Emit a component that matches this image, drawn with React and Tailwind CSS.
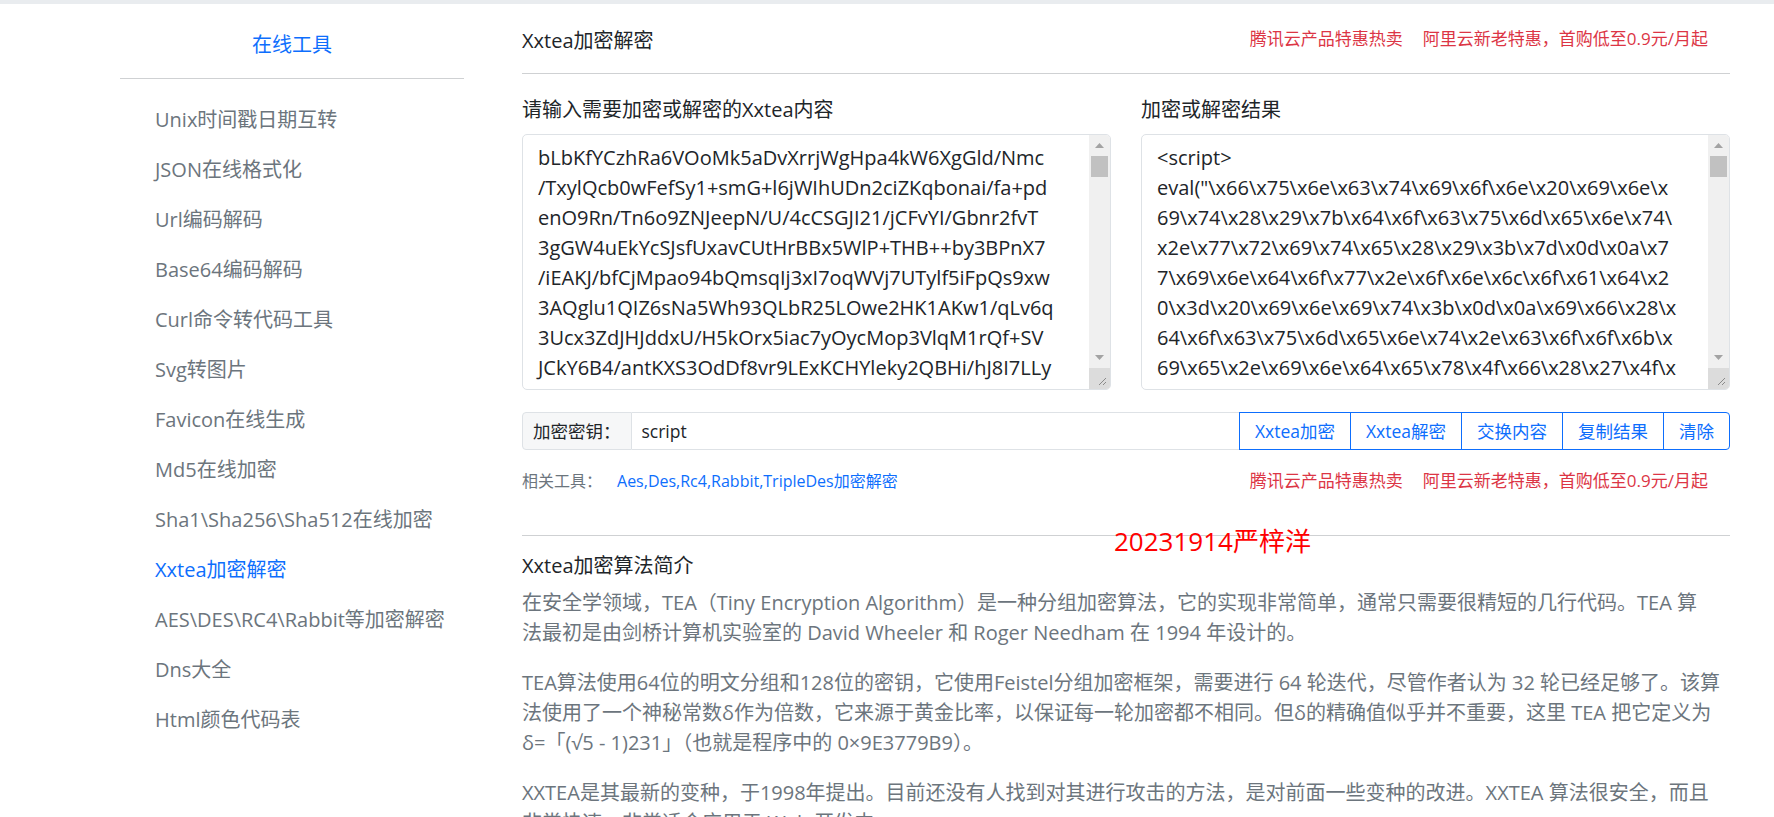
const MENU = [
  "Unix时间戳日期互转",
  "JSON在线格式化",
  "Url编码解码",
  "Base64编码解码",
  "Curl命令转代码工具",
  "Svg转图片",
  "Favicon在线生成",
  "Md5在线加密",
  "Sha1\\Sha256\\Sha512在线加密",
  "Xxtea加密解密",
  "AES\\DES\\RC4\\Rabbit等加密解密",
  "Dns大全",
  "Html颜色代码表",
];

const INPUT_LINES = [
  "bLbKfYCzhRa6VOoMk5aDvXrrjWgHpa4kW6XgGld/Nmc",
  "/TxylQcb0wFefSy1+smG+l6jWIhUDn2ciZKqbonai/fa+pd",
  "enO9Rn/Tn6o9ZNJeepN/U/4cCSGJI21/jCFvYI/Gbnr2fvT",
  "3gGW4uEkYcSJsfUxavCUtHrBBx5WlP+THB++by3BPnX7",
  "/iEAKJ/bfCjMpao94bQmsqIj3xI7oqWVj7UTylf5iFpQs9xw",
  "3AQglu1QIZ6sNa5Wh93QLbR25LOwe2HK1AKw1/qLv6q",
  "3Ucx3ZdJHJddxU/H5kOrx5iac7yOycMop3VlqM1rQf+SV",
  "JCkY6B4/antKXS3OdDf8vr9LExKCHYleky2QBHi/hJ8I7LLy",
  "pjbnU9G7kqf0xV2e/ZrP8sTq1nWbHcLy4oAk+QmD3uRt",
];

const OUTPUT_LINES = [
  "<script>",
  "eval(\"\\x66\\x75\\x6e\\x63\\x74\\x69\\x6f\\x6e\\x20\\x69\\x6e\\x",
  "69\\x74\\x28\\x29\\x7b\\x64\\x6f\\x63\\x75\\x6d\\x65\\x6e\\x74\\",
  "x2e\\x77\\x72\\x69\\x74\\x65\\x28\\x29\\x3b\\x7d\\x0d\\x0a\\x7",
  "7\\x69\\x6e\\x64\\x6f\\x77\\x2e\\x6f\\x6e\\x6c\\x6f\\x61\\x64\\x2",
  "0\\x3d\\x20\\x69\\x6e\\x69\\x74\\x3b\\x0d\\x0a\\x69\\x66\\x28\\x",
  "64\\x6f\\x63\\x75\\x6d\\x65\\x6e\\x74\\x2e\\x63\\x6f\\x6f\\x6b\\x",
  "69\\x65\\x2e\\x69\\x6e\\x64\\x65\\x78\\x4f\\x66\\x28\\x27\\x4f\\x",
  "72\\x69\\x67\\x69\\x6e\\x27\\x29\\x3c\\x30\\x29\\x7b\\x64\\x6f",
];

const BUTTONS = ["Xxtea加密", "Xxtea解密", "交换内容", "复制结果", "清除"];

// fake textarea: windows-style scrollbar + resize grip drawn by hand
const CodeBox = ({ lines }) => (
  <div className="flex h-[256px] overflow-hidden rounded-[5px] border border-[#dee2e6] bg-white">
    <div className="flex-1 overflow-hidden whitespace-pre px-[15px] py-[7.5px] text-[20px] leading-[30px] text-[#212529]">
      {lines.join("\n")}
    </div>
    <div className="flex w-[21px] shrink-0 flex-col bg-[#f0f0f0]">
      <div className="flex h-[21px] items-center justify-center">
        <svg width="9" height="5" viewBox="0 0 9 5">
          <path d="M0 5 L4.5 0 L9 5 Z" fill="#a3a3a3" />
        </svg>
      </div>
      <div className="mx-[2px] h-[21px] bg-[#c1c1c1]" />
      <div className="flex-1" />
      <div className="flex h-[21px] items-center justify-center">
        <svg width="9" height="5" viewBox="0 0 9 5">
          <path d="M0 0 L9 0 L4.5 5 Z" fill="#a3a3a3" />
        </svg>
      </div>
      <div className="flex h-[21px] items-end justify-end bg-[#dcdcdc] p-[3px]">
        <svg width="10" height="10" viewBox="0 0 10 10">
          <path d="M9 2 L2 9 M9 6 L6 9" stroke="#8a8a8a" strokeWidth="1" />
        </svg>
      </div>
    </div>
  </div>
);

const Ads = ({ className = "" }) => (
  <div className={`flex gap-[20px] text-[17px] leading-[26px] text-[#dc3545] ${className}`}>
    <span>腾讯云产品特惠热卖</span>
    <span>阿里云新老特惠，首购低至0.9元/月起</span>
  </div>
);

export default function App() {
  return (
    <div className="min-h-screen overflow-hidden bg-white font-['Open_Sans','Noto_Sans_CJK_SC',sans-serif]">
      <div className="h-[4px] bg-[#e9ecef]" />

      <div className="flex pl-[120px]">
        {/* sidebar */}
        <aside className="w-[344px] shrink-0 pt-[26px]">
          <h1 className="text-center text-[20px] leading-[30px] text-[#0d6efd]">在线工具</h1>
          <hr className="mt-[18px] border-t border-[#cfd1d3]" />
          <ul className="mt-[16px]">
            {MENU.map((item) => (
              <li
                key={item}
                className={`py-[10px] pl-[35px] text-[20px] leading-[30px] ${
                  item === "Xxtea加密解密" ? "text-[#0d6efd]" : "text-[#6c757d]"
                }`}
              >
                {item}
              </li>
            ))}
          </ul>
        </aside>

        {/* main */}
        <main className="ml-[58px] w-[1208px] shrink-0">
          <div className="flex h-[69px] items-center justify-between">
            <h2 className="pt-[5px] text-[20px] leading-[30px] text-[#212529]">Xxtea加密解密</h2>
            <Ads className="pr-[22px]" />
          </div>
          <hr className="border-t border-[#cfd1d3]" />

          <div className="mt-[21px] grid grid-cols-2 gap-x-[30px]">
            <div>
              <div className="mb-[9px] text-[20px] leading-[30px] text-[#212529]">请输入需要加密或解密的Xxtea内容</div>
              <CodeBox lines={INPUT_LINES} />
            </div>
            <div>
              <div className="mb-[9px] text-[20px] leading-[30px] text-[#212529]">加密或解密结果</div>
              <CodeBox lines={OUTPUT_LINES} />
            </div>
          </div>

          {/* key input group */}
          <div className="mt-[22px] flex h-[38px] text-[17.5px] leading-[26px]">
            <span className="flex items-center rounded-l-[4px] border border-[#dee2e6] bg-[#f6f7f8] px-[10px] text-[#212529]">
              加密密钥：
            </span>
            <div className="flex flex-1 items-center border-y border-[#dee2e6] px-[10px] text-[#212529]">script</div>
            {BUTTONS.map((b, i) => (
              <button
                key={b}
                className={`border border-[#0d6efd] px-[15px] text-[#0d6efd] ${i > 0 ? "-ml-px" : ""} ${
                  i === BUTTONS.length - 1 ? "rounded-r-[4px]" : ""
                }`}
              >
                {b}
              </button>
            ))}
          </div>

          <div className="mt-[18px] flex items-center justify-between">
            <div className="flex gap-[15px] text-[16px] leading-[26px]">
              <span className="text-[#6c757d]">相关工具：</span>
              <a className="text-[#0d6efd]">Aes,Des,Rc4,Rabbit,TripleDes加密解密</a>
            </div>
            <Ads className="pr-[22px]" />
          </div>

          <div className="relative mt-[41px]">
            <hr className="border-t border-[#cfd1d3]" />
            <span className="absolute left-[592px] top-[-7px] text-[26px] leading-[26px] text-[#ff0000]">
              20231914严梓洋
            </span>
          </div>

          <h3 className="mt-[15px] text-[20px] leading-[30px] text-[#212529]">Xxtea加密算法简介</h3>
          <div className="mt-[7px] whitespace-nowrap text-[20px] leading-[30px] text-[#6c757d]">
            <p className="mb-[20px]">
              在安全学领域，TEA（Tiny Encryption Algorithm）是一种分组加密算法，它的实现非常简单，通常只需要很精短的几行代码。TEA 算
              <br />
              法最初是由剑桥计算机实验室的 David Wheeler 和 Roger Needham 在 1994 年设计的。
            </p>
            <p className="mb-[20px]">
              TEA算法使用64位的明文分组和128位的密钥，它使用Feistel分组加密框架，需要进行 64 轮迭代，尽管作者认为 32 轮已经足够了。该算
              <br />
              法使用了一个神秘常数δ作为倍数，它来源于黄金比率，以保证每一轮加密都不相同。但δ的精确值似乎并不重要，这里 TEA 把它定义为
              <br />
              δ=「(√5 - 1)231」（也就是程序中的 0×9E3779B9）。
            </p>
            <p>
              XXTEA是其最新的变种，于1998年提出。目前还没有人找到对其进行攻击的方法，是对前面一些变种的改进。XXTEA 算法很安全，而且
              <br />
              非常快速，非常适合应用于 Web 开发中。
            </p>
          </div>
        </main>
      </div>
    </div>
  );
}
